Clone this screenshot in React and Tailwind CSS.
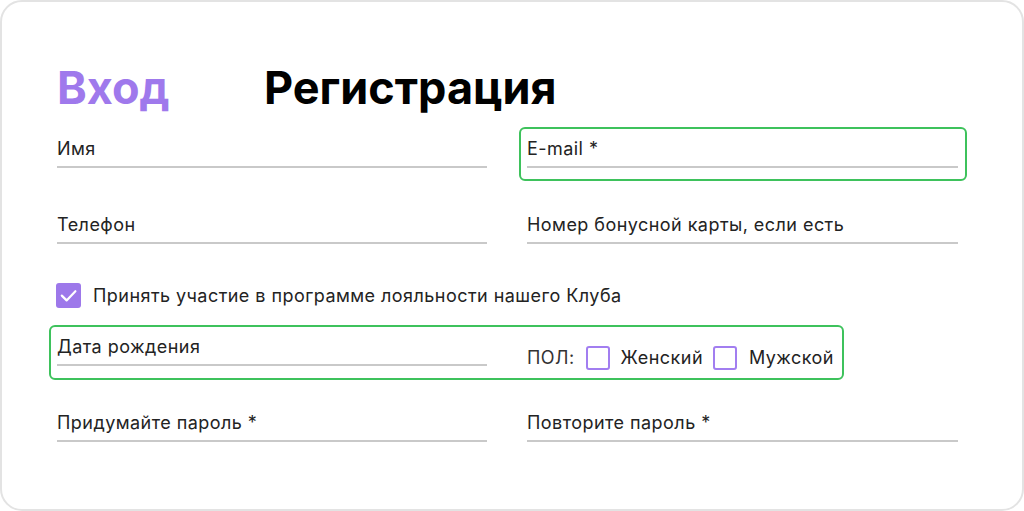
import React from "react";

function Field({ label, children }) {
  return (
    <div className="relative">
      <div className="text-[18px] leading-[24px] tracking-[0.45px] text-[#232323]">{label}</div>
      <div className="mt-[5px] h-[2px] bg-[#c9c9c9]" />
      {children}
    </div>
  );
}

function Box({ checked }) {
  return checked ? (
    <div className="w-[25px] h-[25px] rounded-[3px] bg-[#9d78ea] flex items-center justify-center shrink-0">
      <svg width="25" height="25" viewBox="0 0 25 25" fill="none">
        <path d="M5.8 12.6 L10.6 17.4 L19.4 8.2" stroke="white" strokeWidth="2.2" strokeLinecap="round" strokeLinejoin="round" />
      </svg>
    </div>
  ) : (
    <div className="w-[24px] h-[24px] rounded-[3px] border-2 border-[#a27ef0] shrink-0" />
  );
}

export default function App() {
  return (
    <div className="w-[1024px] h-[511px] bg-white" style={{ fontFamily: "Inter, 'Noto Sans', sans-serif" }}>
      <div className="w-[1024px] h-[511px] border-2 border-[#e3e3e3] rounded-[22px] bg-white pl-[55px] pt-[63px]">
        <div className="flex items-start text-[45px] leading-[45px] font-bold">
          <div className="w-[207px] text-[#9f79ec]">Вход</div>
          <div className="text-black">Регистрация</div>
        </div>

        <div className="mt-[27px] grid grid-cols-[430px_431px] gap-x-[40px] gap-y-[45px]">
          <Field label="Имя" />
          <Field label="E-mail *">
            <div className="absolute -left-[8px] -top-[10px] -right-[9px] -bottom-[13px] border-2 border-[#3ec25c] rounded-[6px]" />
          </Field>
          <Field label="Телефон" />
          <Field label="Номер бонусной карты, если есть" />
        </div>

        <div className="mt-[39px] flex items-center gap-[12px] -ml-[1px]">
          <Box checked />
          <div className="text-[18px] leading-[24px] tracking-[0.45px] text-[#232323]">Принять участие в программе лояльности нашего Клуба</div>
        </div>

        <div className="relative mt-[27px] grid grid-cols-[430px_431px] gap-x-[40px]">
          <div className="absolute -left-[8px] -top-[10px] w-[795px] h-[55px] border-2 border-[#3ec25c] rounded-[6px]" />
          <Field label="Дата рождения" />
          <div className="pt-[11px] flex items-center h-[24px] box-content text-[18px] leading-[24px] tracking-[0.45px] text-[#333]">
            <span>ПОЛ:</span>
            <span className="ml-[11px]"><Box /></span>
            <span className="ml-[11px] text-[#232323]">Женский</span>
            <span className="ml-[10px]"><Box /></span>
            <span className="ml-[12px] text-[#232323]">Мужской</span>
          </div>
        </div>

        <div className="mt-[41px] grid grid-cols-[430px_431px] gap-x-[40px]">
          <Field label="Придумайте пароль *" />
          <Field label="Повторите пароль *" />
        </div>
      </div>
    </div>
  );
}
